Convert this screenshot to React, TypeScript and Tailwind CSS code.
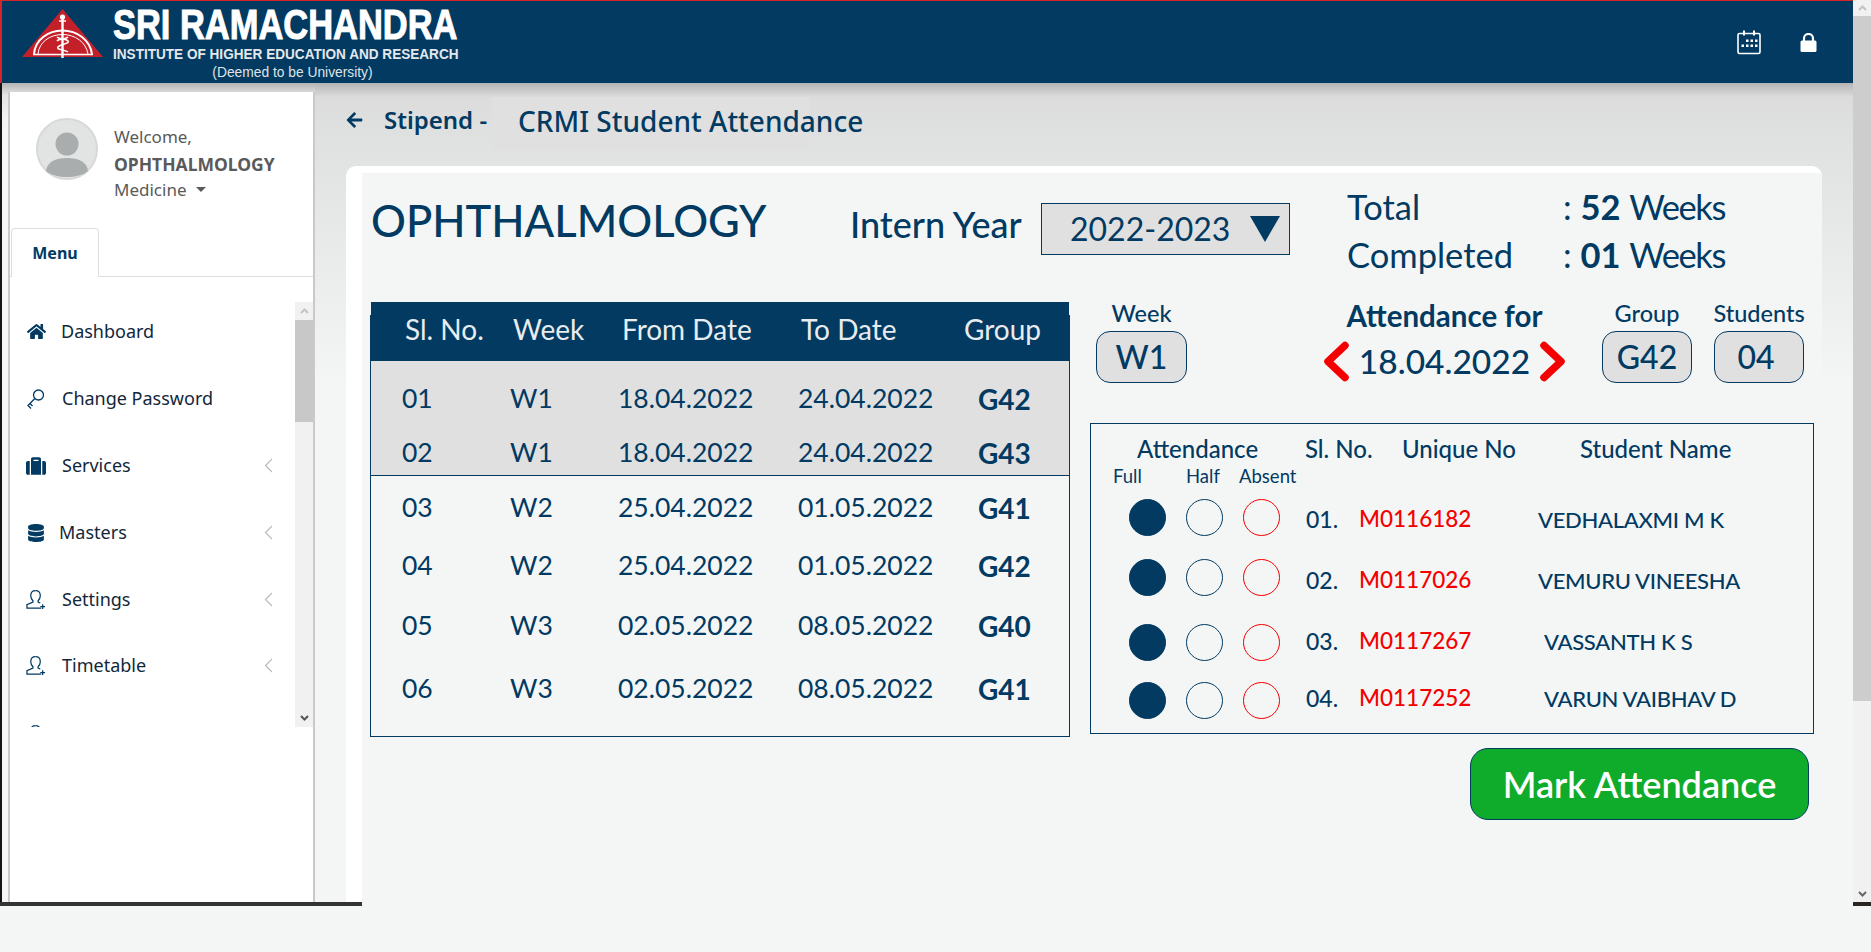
import { FC } from 'react'
import { FaArrowLeft, FaDatabase, FaHome, FaSuitcase } from 'react-icons/fa'

const navy = 'text-[#023a62]'

const weeks = [
  { no: '03', week: 'W2', from: '25.04.2022', to: '01.05.2022', group: 'G41', gap: 'mt-[10px]' },
  { no: '04', week: 'W2', from: '25.04.2022', to: '01.05.2022', group: 'G42', gap: 'mt-[14px]' },
  { no: '05', week: 'W3', from: '02.05.2022', to: '08.05.2022', group: 'G40', gap: 'mt-[16px]' },
  { no: '06', week: 'W3', from: '02.05.2022', to: '08.05.2022', group: 'G41', gap: 'mt-[19px]' },
]

const students = [
  { no: '01.', id: 'M0116182', name: 'VEDHALAXMI M K', row: 'h-[62px]', indent: 'ml-[68px]', nudge: 'mt-[4px]' },
  { no: '02.', id: 'M0117026', name: 'VEMURU VINEESHA', row: 'h-[58px]', indent: 'ml-[68px]', nudge: 'mt-[6px]' },
  { no: '03.', id: 'M0117267', name: 'VASSANTH K S', row: 'h-[72px]', indent: 'ml-[74px]', nudge: 'mb-[2px]' },
  { no: '04.', id: 'M0117252', name: 'VARUN VAIBHAV D', row: 'h-[44px]', indent: 'ml-[74px]', nudge: 'mb-[4px]' },
]

const KeyIcon = () => (
  <svg width="20" height="22" viewBox="0 0 20 22" fill="none" stroke="#023a62" strokeWidth="1.3">
    <circle cx="12.5" cy="7" r="5" />
    <path d="M8.8 10.5 2 17.5l3 3M4 15.5l2.5 2.5" />
  </svg>
)

const UserPlusIcon = () => (
  <svg width="21" height="21" viewBox="0 0 21 21" fill="none" stroke="#023a62" strokeWidth="1.3">
    <path d="M10 1.2c-3 0-5 2.2-5 5.3 0 2.3 1 4 2.3 5.3v1.4L1 16v3.6h15" />
    <path d="M10 1.2c3 0 5 2.2 5 5.3 0 2.3-1 4-2.3 5.3v1.4l2.3 1" />
    <path d="M17.5 15.5v5M15 18h5" />
  </svg>
)

const ChevronThin = () => (
  <svg width="9" height="15" viewBox="0 0 9 15" fill="none" stroke="#b9bcbc" strokeWidth="1.2">
    <path d="M8 1 1.5 7.5 8 14" />
  </svg>
)

const navItems = [
  { label: 'Dashboard', icon: <FaHome className="text-[#023a62] text-[19px]" />, arrow: false, gap: 'gap-[15px]', box: 'h-[67px]' },
  { label: 'Change Password', icon: <KeyIcon />, arrow: false, gap: 'gap-[16px]', box: 'h-[67px]' },
  { label: 'Services', icon: <FaSuitcase className="text-[#023a62] text-[20px]" />, arrow: true, gap: 'gap-[16px]', box: 'h-[67px]' },
  { label: 'Masters', icon: <FaDatabase className="text-[#023a62] text-[18px]" />, arrow: true, gap: 'gap-[13px]', box: 'h-[67px]' },
  { label: 'Settings', icon: <UserPlusIcon />, arrow: true, gap: 'gap-[16px]', box: 'h-[67px]' },
  { label: 'Timetable', icon: <UserPlusIcon />, arrow: true, gap: 'gap-[16px]', box: 'h-[65px]' },
  { label: 'P G Student Attendance', icon: <UserPlusIcon />, arrow: true, gap: 'gap-[16px]', box: 'h-[73px]' },
]

const Logo = () => (
  <svg width="82" height="50" viewBox="0 0 82 50" className="shrink-0">
    <path d="M40.500 0 81 48H0Z" fill="#c4202a" />
    <g fill="none" stroke="#fff">
      <path d="M12 45C13 31 26 21.500 40.500 21.500S68 31 70 45" strokeWidth="2" />
      <path d="M16 45C17 33 28 25.500 40.500 25.500S64 33 66 45" strokeWidth="1" />
      <path d="M11 45.500H71" strokeWidth="1.600" />
      <path d="M40.500 7V49" strokeWidth="2.400" />
      <path d="M37 12H44M35 28c3 3 9 1 11 4s-8 3-10 6 8 3 10 5M46 28c-3 3-9 1-11 4" strokeWidth="1.500" />
    </g>
    <circle cx="40.500" cy="8" r="2.600" fill="#fff" />
  </svg>
)

const CalendarIcon = () => (
  <svg width="24" height="25" viewBox="0 0 24 25" fill="#fff">
    <rect x="1" y="3.500" width="22" height="20" rx="1.500" fill="none" stroke="#fff" strokeWidth="1.600" />
    <rect x="6" y="0.500" width="2" height="5" />
    <rect x="16" y="0.500" width="2" height="5" />
    <rect x="9" y="9.500" width="2.500" height="2.500" /><rect x="13.500" y="9.500" width="2.500" height="2.500" /><rect x="18" y="9.500" width="2.500" height="2.500" />
    <rect x="4.500" y="14.500" width="2.500" height="2.500" /><rect x="9" y="14.500" width="2.500" height="2.500" /><rect x="13.500" y="14.500" width="2.500" height="2.500" /><rect x="18" y="14.500" width="2.500" height="2.500" />
  </svg>
)

const LockIcon = () => (
  <svg width="17" height="19" viewBox="0 0 17 19" fill="#fff">
    <path d="M4 8V5.500a4.500 4.500 0 0 1 9 0V8" fill="none" stroke="#fff" strokeWidth="2.200" />
    <rect x="0.500" y="7.500" width="16" height="11.500" rx="1.500" />
  </svg>
)

const Avatar = () => (
  <svg width="62" height="62" viewBox="0 0 62 62" className="shrink-0">
    <circle cx="31" cy="31" r="30" fill="#e2e4e4" stroke="#d8d8d8" strokeWidth="2" />
    <circle cx="31" cy="26" r="11.500" fill="#a9adad" />
    <path d="M10 53c1-9 9-13 21-13s20 4 21 13c-5 4-13 6-21 6s-16-2-21-6Z" fill="#a9adad" />
  </svg>
)

const Chevron: FC<{ right?: boolean }> = ({ right }) => (
  <svg width="27" height="41" viewBox="0 0 27 41" fill="none" stroke="#f50000" strokeWidth="7.500" strokeLinecap="round" strokeLinejoin="round">
    <path d={right ? 'M5 4.500 22 20.500 5 36.500' : 'M22 4.500 5 20.500 22 36.500'} />
  </svg>
)

const InfoBox: FC<{ label: string; value: string; width: string; boxClass?: string }> = ({ label, value, width, boxClass }) => (
  <div className={`flex flex-col items-center ${width}`}>
    <span className={`-mt-[3px] mb-[3px] text-[23.500px] font-medium leading-[29px] whitespace-nowrap ${navy}`}>{label}</span>
    <div className={`h-[52px] w-full rounded-[14px] border border-[#023a62] bg-[#e0e0e0] flex items-center justify-center text-[32px] font-medium ${navy} ${boxClass ?? ''}`}>
      {value}
    </div>
  </div>
)

const Radio: FC<{ kind: 'full' | 'half' | 'absent' }> = ({ kind }) => (
  <span
    className={`block w-[37px] h-[37px] rounded-full border ${
      kind === 'full' ? 'bg-[#023a62] border-[#023a62]' : kind === 'half' ? 'border-[#023a62]' : 'border-[#f50000]'
    }`}
  />
)

const App: FC = () => {
  return (
    <div className="relative flex h-[952px] w-full overflow-hidden bg-[#f4f6f6] font-['Lato',sans-serif]">
      <div className="flex min-w-0 flex-1 flex-col">
        <header className="flex h-[83px] shrink-0 items-center border-l-2 border-t border-[#d8232a] bg-[#023a62] pl-[20px]">
          <div className="flex items-start pt-[4px]">
            <Logo />
            <div className="ml-[9px] w-[346px] font-['Liberation_Sans',sans-serif] text-white">
              <div className="origin-left scale-x-[0.82] whitespace-nowrap text-[42px] font-bold leading-[34px] -mt-[1px] [-webkit-text-stroke:1px_white]">SRI RAMACHANDRA</div>
              <div className="origin-left scale-x-[0.97] whitespace-nowrap text-[14px] font-bold leading-[16px] mt-[4px] text-[#e4e8ec]">INSTITUTE OF HIGHER EDUCATION AND RESEARCH</div>
              <div className="pl-[13px] text-center text-[13.800px] leading-[15px] mt-[3px] text-[#dfe4e8]">(Deemed to be University)</div>
            </div>
          </div>
          <div className="ml-auto mr-[36px] flex items-center gap-[39px]">
            <CalendarIcon />
            <LockIcon />
          </div>
        </header>

        <div className="flex flex-1">
          {/* sidebar */}
          <div className="h-[819px] w-[315px] shrink-0 border-l-2 border-[#17110f] bg-[linear-gradient(#b4b4b4_0px,#e4e4e4_12px,#f4f6f6_40px)] pl-[6px] pt-[9px]">
            <aside className="flex h-full flex-col border-x-2 border-[#c9c9c9] bg-white font-['Noto_Sans',sans-serif]">
              <div className="flex h-[136px] shrink-0 pl-[26px] pt-[26px]">
                <Avatar />
                <div className="ml-[16px] text-[17px] leading-[26.500px] text-[#5a5a5a]">
                  <div className="pt-[6px]">Welcome,</div>
                  <div className="text-[17.500px] font-bold">OPHTHALMOLOGY</div>
                  <div className="flex items-center">
                    Medicine
                    <span className="ml-[9px] mt-[-2px] h-0 w-0 border-x-[5px] border-t-[5px] border-x-transparent border-t-[#5a5a5a]" />
                  </div>
                </div>
              </div>
              <div className="h-[49px] shrink-0 border-b border-[#dcdfe2] pl-[1px]">
                <div className={`flex h-[49px] w-[88px] items-center justify-center rounded-t-[4px] border-x border-t border-[#dcdfe2] bg-white text-[16px] font-bold ${navy}`}>
                  Menu
                </div>
              </div>
              <div className="mt-[25px] flex h-[425px] shrink-0">
                <nav className="flex-1 overflow-hidden pl-[16px]">
                  <div className="-mt-[4px]">
                    {navItems.map((item) => (
                      <div key={item.label} className={`flex items-center ${item.box} ${item.gap} text-[18px] text-[#12283a]`}>
                        <span className="flex w-[20px] shrink-0 justify-center">{item.icon}</span>
                        <span className="whitespace-nowrap">{item.label}</span>
                        {item.arrow && (
                          <span className="ml-auto mr-[22px]">
                            <ChevronThin />
                          </span>
                        )}
                      </div>
                    ))}
                  </div>
                </nav>
                <div className="flex w-[18px] shrink-0 flex-col bg-[#f1f1f1]">
                  <div className="flex h-[18px] items-center justify-center">
                    <svg width="9" height="6" viewBox="0 0 9 6" fill="none" stroke="#c4c4c4" strokeWidth="2"><path d="M1 5l3.500-3.500L8 5" /></svg>
                  </div>
                  <div className="h-[102px] bg-[#c8c8c8]" />
                  <div className="mt-auto flex h-[18px] items-center justify-center">
                    <svg width="9" height="6" viewBox="0 0 9 6" fill="none" stroke="#555" strokeWidth="2"><path d="M1 1l3.500 3.500L8 1" /></svg>
                  </div>
                </div>
              </div>
            </aside>
          </div>

          {/* main */}
          <main className="min-w-0 flex-1 bg-[linear-gradient(#b4b4b4_0px,#dcdcdc_14px,#e2e4e4_85px,#f4f6f6_300px)] pl-[31px]">
            <div className={`flex h-[83px] items-start ${navy}`}>
              <FaArrowLeft className="mt-[28px] w-[17px] text-[18px]" />
              <span className="ml-[21px] mt-[20px] w-[108px] shrink-0 whitespace-nowrap font-['Noto_Sans',sans-serif] text-[24px] font-semibold leading-[34px]">Stipend -</span>
              <span className="mt-[14px] flex h-[53px] w-[317px] items-start whitespace-nowrap bg-[#e0e0e0] pl-[26px] pt-[5px] font-['Noto_Sans',sans-serif] text-[28px] font-medium leading-[38px]">
                CRMI Student Attendance
              </span>
            </div>

            <div className="h-[736px] w-[1476px] rounded-t-[10px] bg-white pl-[16px] pt-[7px]">
              <div className={`h-[779px] bg-[#f4f6f6] ${navy}`}>
                {/* top row */}
                <div className="flex h-[129px] items-start pl-[9px]">
                  <h1 className="mt-[22px] w-[479px] whitespace-nowrap text-[43.500px] font-medium leading-[50px]">OPHTHALMOLOGY</h1>
                  <span className="mt-[31px] w-[191px] whitespace-nowrap text-[36px] font-medium leading-[40px]">Intern Year</span>
                  <div className="mt-[30px] flex h-[52px] w-[249px] items-center border border-[#023a62] bg-[#e0e0e0] pl-[28px]">
                    <span className="text-[32px]">2022-2023</span>
                    <span className="ml-[20px] h-0 w-0 border-x-[15px] border-t-[26px] border-x-transparent border-t-[#023a62]" />
                  </div>
                  <div className="ml-[57px] mt-[10px] grid grid-cols-[216px_1fr] text-[34.500px] leading-[48px]">
                    <span>Total</span>
                    <span>: <b className="font-bold">52</b> <span className="tracking-[-1.400px]">Weeks</span></span>
                    <span>Completed</span>
                    <span>: <b className="font-bold">01</b> <span className="tracking-[-1.400px]">Weeks</span></span>
                  </div>
                </div>

                <div className="flex items-start pl-[8px]">
                  {/* weeks table */}
                  <div className="mt-[13px] h-[422px] w-[700px] border-x border-b border-[#023a62]">
                    <div className="-mt-[13px] grid h-[59px] grid-cols-[108px_109px_179px_163px_1fr] items-center bg-[#023a62] pb-[5px] pl-[34px] text-[28px] text-[#e8ecef]">
                      <span>Sl. No.</span>
                      <span>Week</span>
                      <span>From Date</span>
                      <span>To Date</span>
                      <span>Group</span>
                    </div>
                    <div className="h-[115px] border-b border-[#023a62] bg-[#e0e0e0] pl-[31px] pt-[16px]">
                      <div className="grid h-[44px] grid-cols-[108px_108px_180px_180px_1fr] items-center text-[26.500px]">
                        <span>01</span><span>W1</span><span>18.04.2022</span><span>24.04.2022</span><b className="text-[28px] font-bold">G42</b>
                      </div>
                      <div className="mt-[10px] grid h-[44px] grid-cols-[108px_108px_180px_180px_1fr] items-center text-[26.500px]">
                        <span>02</span><span>W1</span><span>18.04.2022</span><span>24.04.2022</span><b className="text-[28px] font-bold">G43</b>
                      </div>
                    </div>
                    <div className="pl-[31px]">
                      {weeks.map((r) => (
                        <div key={r.no} className={`grid h-[44px] grid-cols-[108px_108px_180px_180px_1fr] items-center text-[26.500px] ${r.gap}`}>
                          <span>{r.no}</span><span>{r.week}</span><span>{r.from}</span><span>{r.to}</span><b className="text-[28px] font-bold">{r.group}</b>
                        </div>
                      ))}
                    </div>
                  </div>

                  {/* attendance column */}
                  <div className="ml-[20px] w-[724px] shrink-0">
                    <div className="flex h-[121px] items-start pl-[6px]">
                      <InfoBox label="Week" value="W1" width="w-[91px]" />
                      <div className="ml-[136px] flex w-[243px] flex-col items-center">
                        <span className="text-[29.500px] font-bold leading-[29px] mt-[-1px] whitespace-nowrap">Attendance for</span>
                        <div className="mt-[11px] flex w-full items-center justify-between">
                          <Chevron />
                          <span className="text-[33.500px] font-medium leading-[41px]">18.04.2022</span>
                          <Chevron right />
                        </div>
                      </div>
                      <InfoBox label="Group" value="G42" width="ml-[36px] w-[90px]" />
                      <InfoBox label="Students" value="04" width="ml-[22px] w-[90px]" boxClass="pr-[6px]" />
                    </div>

                    <div className="h-[311px] border border-[#023a62]">
                      <div className="flex h-[40px] items-end text-[24px] font-medium leading-[30px]">
                        <span className="ml-[46px] w-[168px] whitespace-nowrap">Attendance</span>
                        <span className="w-[97px] whitespace-nowrap">Sl. No.</span>
                        <span className="w-[178px] whitespace-nowrap">Unique No</span>
                        <span className="whitespace-nowrap">Student Name</span>
                      </div>
                      <div className="flex h-[22px] items-center pt-[4px] text-[18.500px]">
                        <span className="ml-[22px] w-[73px]">Full</span>
                        <span className="w-[53px]">Half</span>
                        <span>Absent</span>
                      </div>
                      {students.map((s) => (
                        <div key={s.no} className={`flex items-center pl-[38px] ${s.row}`}>
                          <div className="flex w-[177px] shrink-0 items-center gap-[20px]">
                            <Radio kind="full" />
                            <Radio kind="half" />
                            <Radio kind="absent" />
                          </div>
                          <div className={`flex items-center font-medium ${s.nudge}`}>
                            <span className="w-[53px] text-[23px]">{s.no}</span>
                            <span className="w-[111px] text-[22.500px] text-[#f50000]">{s.id}</span>
                            <span className={`whitespace-nowrap text-[22px] tracking-[-0.3px] ${s.indent}`}>{s.name}</span>
                          </div>
                        </div>
                      ))}
                    </div>

                    <div className="mt-[14px] ml-[380px] flex h-[72px] w-[339px] items-center justify-center rounded-[18px] border border-[#023a62] bg-[#0fab2a] text-[36px] font-semibold text-white">
                      Mark Attendance
                    </div>
                  </div>
                </div>
              </div>
            </div>
          </main>
        </div>
      </div>

      {/* page scrollbar */}
      <div className="flex h-[906px] w-[18px] shrink-0 flex-col bg-[#f1f1f1]">
        <div className="flex h-[16px] items-center justify-center">
          <svg width="9" height="6" viewBox="0 0 9 6" fill="none" stroke="#c4c4c4" strokeWidth="2"><path d="M1 5l3.500-3.500L8 5" /></svg>
        </div>
        <div className="h-[685px] bg-[#cdcdcd]" />
        <div className="mt-auto flex h-[16px] items-center justify-center">
          <svg width="9" height="6" viewBox="0 0 9 6" fill="none" stroke="#666" strokeWidth="2"><path d="M1 1l3.500 3.500L8 1" /></svg>
        </div>
        <div className="h-[4px] bg-[#2a2624]" />
      </div>

      {/* dark strip along the bottom of the old page */}
      <div className="absolute left-0 top-[902px] h-[4px] w-[362px] bg-[#333]" />
    </div>
  )
}

export default App
